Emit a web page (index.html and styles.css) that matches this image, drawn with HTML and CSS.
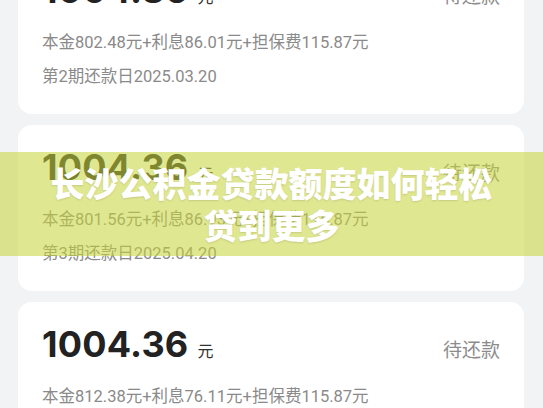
FILE: index.html
```html
<!DOCTYPE html>
<html lang="zh-CN">
<head>
    <meta charset="UTF-8">
    <meta name="viewport" content="width=device-width, initial-scale=1.0">
    <title>长沙公积金贷款额度如何轻松贷到更多</title>
    <link rel="stylesheet" href="styles.css">
</head>
<body>
    <div class="list">
        <div class="card">
            <div class="card-head">
                <div class="amount">1004.36<span class="unit">元</span></div>
                <div class="status">待还款</div>
            </div>
            <p class="detail">本金802.48元+利息86.01元+担保费115.87元</p>
            <p class="detail">第2期还款日2025.03.20</p>
        </div>
        <div class="card">
            <div class="card-head">
                <div class="amount">1004.36<span class="unit">元</span></div>
                <div class="status">待还款</div>
            </div>
            <p class="detail">本金801.56元+利息86.93元+担保费115.87元</p>
            <p class="detail">第3期还款日2025.04.20</p>
        </div>
        <div class="card">
            <div class="card-head">
                <div class="amount">1004.36<span class="unit">元</span></div>
                <div class="status">待还款</div>
            </div>
            <p class="detail">本金812.38元+利息76.11元+担保费115.87元</p>
            <p class="detail">第4期还款日2025.05.20</p>
        </div>
    </div>

    <!-- 标题横幅 -->
    <div class="banner">
        <h1>长沙公积金贷款额度如何轻松贷到更多</h1>
    </div>
</body>
</html>
```

FILE: styles.css
```css
* {
    margin: 0;
    padding: 0;
    box-sizing: border-box;
}

body {
    font-family: 'Roboto', 'Noto Sans CJK SC', sans-serif;
    background-color: #f2f3f5;
    height: 408px;
    overflow: hidden;
    position: relative;
}

.list {
    display: flex;
    flex-direction: column;
    gap: 11px;
    padding: 0 19px 0 18px;
    margin-top: -52px;
}

.card {
    background-color: #ffffff;
    border-radius: 14px;
    height: 166px;
    padding: 22px 24px 20px 24px;
}

.card-head {
    display: flex;
    justify-content: space-between;
    align-items: baseline;
    height: 40px;
    line-height: 40px;
}

.amount {
    font-family: 'Inter', 'Roboto', sans-serif;
    font-size: 36px;
    font-weight: 700;
    color: #222222;
    letter-spacing: 0.2px;
}

.unit {
    font-family: 'Noto Sans CJK SC', sans-serif;
    font-size: 16px;
    font-weight: 400;
    letter-spacing: 0;
    margin-left: 9px;
    color: #333333;
}

.status {
    font-family: 'Noto Sans CJK SC', sans-serif;
    font-size: 19px;
    color: #8c8c8c;
}

.detail {
    font-size: 16.5px;
    line-height: 34px;
    color: #8a8a8a;
}

.card-head + .detail {
    margin-top: 16px;
}

.banner {
    position: absolute;
    top: 152px;
    left: 0;
    width: 100%;
    height: 104px;
    background-color: rgba(199, 213, 58, 0.56);
    display: flex;
    align-items: center;
    justify-content: center;
    padding: 0 40px;
}

.banner h1 {
    font-family: 'Noto Sans CJK SC', sans-serif;
    font-size: 34px;
    font-weight: 900;
    line-height: 42px;
    color: #ffffff;
    text-align: center;
    text-shadow: 0 1px 2px rgba(0, 0, 0, 0.12);
}
```
